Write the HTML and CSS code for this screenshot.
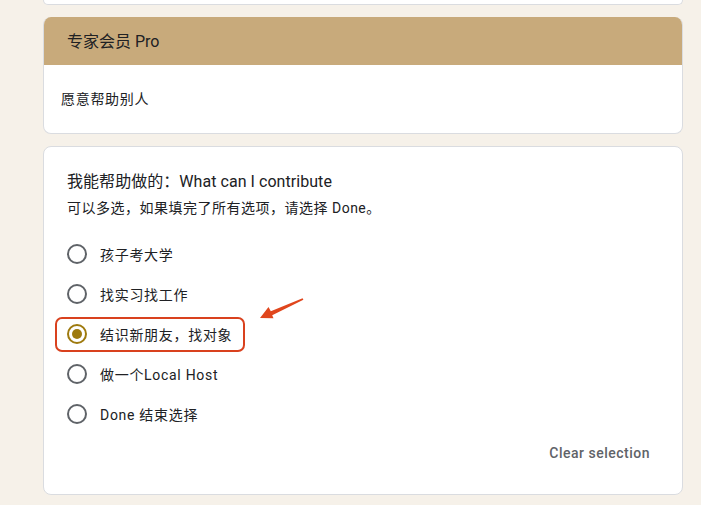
FILE: index.html
```html
<!DOCTYPE html>
<html lang="zh">
<head>
<meta charset="utf-8">
<title>Form</title>
<link rel="stylesheet" href="styles.css">
</head>
<body>
<div class="page">
  <div class="card card-stub"></div>

  <div class="card section">
    <div class="section-head">专家会员 Pro</div>
    <div class="section-body">愿意帮助别人</div>
  </div>

  <div class="card question">
    <div class="q-title">我能帮助做的：What can I contribute</div>
    <div class="q-desc">可以多选，如果填完了所有选项，请选择 Done。</div>
    <div class="options">
      <div class="option"><span class="radio"></span><span class="label">孩子考大学</span></div>
      <div class="option"><span class="radio"></span><span class="label">找实习找工作</span></div>
      <div class="option highlighted"><span class="radio checked"></span><span class="label">结识新朋友，找对象</span></div>
      <div class="option"><span class="radio"></span><span class="label">做一个Local Host</span></div>
      <div class="option"><span class="radio"></span><span class="label">Done 结束选择</span></div>
    </div>
    <div class="clear-row"><span class="clear">Clear selection</span></div>
    <svg class="arrow" width="640" height="349" viewBox="0 0 640 349" aria-hidden="true">
      <polygon points="217,172 225.5,161 227.8,165.3 259.6,152.3 260.4,153.7 229.2,169.2 230.5,172.3" fill="#e0461d"/>
    </svg>
  </div>
</div>
</body>
</html>
```

FILE: styles.css
```css
html, body {
  margin: 0;
  padding: 0;
  background: #f6f1e9;
}

body {
  font-family: Roboto, "Noto Sans CJK SC", sans-serif;
  color: #202124;
}

.page {
  width: 640px;
  margin-left: 43px;
  display: flex;
  flex-direction: column;
  gap: 12px;
}

.card {
  background: #ffffff;
  border: 1px solid #dadce0;
  border-radius: 8px;
  box-sizing: border-box;
}

.card-stub {
  height: 5px;
  border-top: none;
  border-radius: 0 0 8px 8px;
}

.section {
  overflow: hidden;
  border-top: none;
}

.section-head {
  background: #c8aa7b;
  height: 48px;
  box-sizing: border-box;
  display: flex;
  align-items: center;
  font-size: 16px;
  margin: 0 -1px;
  padding-left: 24px;
  padding-bottom: 3px;
}

.section-body {
  height: 68px;
  padding-left: 17px;
  display: flex;
  align-items: center;
  font-size: 14px;
  letter-spacing: 0.7px;
  box-sizing: border-box;
  padding-bottom: 2px;
}

.question {
  position: relative;
  padding: 23px 32px 31px 23px;
  height: 349px;
}

.q-title {
  font-size: 16px;
  line-height: 24px;
  letter-spacing: 0.05px;
}

.q-desc {
  font-size: 14px;
  line-height: 20px;
  margin-top: 4px;
  letter-spacing: 0.5px;
}

.options {
  margin-top: 16px;
  display: flex;
  flex-direction: column;
}

.option {
  position: relative;
  height: 40px;
  display: flex;
  align-items: center;
  gap: 13px;
  font-size: 14px;
  letter-spacing: 0.7px;
}

.radio {
  width: 20px;
  height: 20px;
  border: 2px solid #5f6368;
  border-radius: 50%;
  box-sizing: border-box;
  flex: none;
  display: flex;
  align-items: center;
  justify-content: center;
}

.radio.checked {
  border-color: #9e7a0e;
}

.radio.checked::after {
  content: "";
  width: 10px;
  height: 10px;
  border-radius: 50%;
  background: #9e7a0e;
}

.highlighted::before {
  content: "";
  position: absolute;
  left: -12px;
  top: 3px;
  width: 190px;
  height: 35px;
  border: 2px solid #d9411e;
  border-radius: 7px;
  box-sizing: border-box;
}

.clear-row {
  margin-top: 9px;
  display: flex;
  justify-content: flex-end;
}

.clear {
  font-size: 14px;
  line-height: 20px;
  font-weight: 500;
  color: #5f6368;
  letter-spacing: 0.5px;
}

.arrow {
  position: absolute;
  left: -1px;
  top: -1px;
  pointer-events: none;
}
```
